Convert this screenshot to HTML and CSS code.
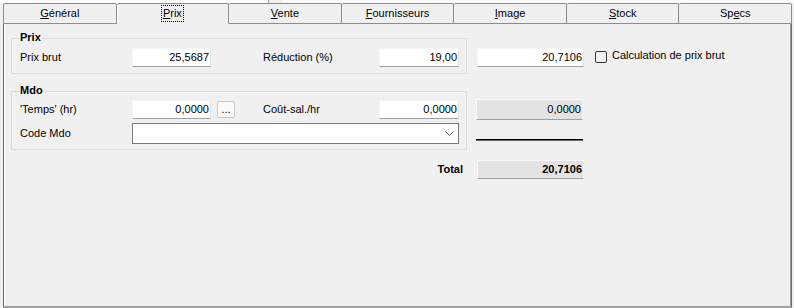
FILE: index.html
```html
<!DOCTYPE html>
<html lang="fr">
<head>
<meta charset="utf-8">
<title>Prix</title>
<link rel="stylesheet" href="styles.css">
</head>
<body>
  <div class="top">
    <div class="topfield"><span class="toptext">Titre : 0000 000000 000000000000 0000000000</span></div>
    <div class="topgap"></div>
    <div class="toprest"></div>
  </div>
  <div class="tabs">
    <div class="tab"><span><u>G</u>énéral</span></div>
    <div class="tab active"><span class="focus"><u>P</u>rix</span></div>
    <div class="tab"><span><u>V</u>ente</span></div>
    <div class="tab"><span><u>F</u>ournisseurs</span></div>
    <div class="tab"><span><u>I</u>mage</span></div>
    <div class="tab"><span><u>S</u>tock</span></div>
    <div class="tab"><span>Sp<u>e</u>cs</span></div>
  </div>
  <div class="panel">
    <div class="form">
      <div class="group g-prix"><span class="gtitle">Prix</span></div>
      <div class="group g-mdo"><span class="gtitle">Mdo</span></div>

      <span class="lbl row-a col-lbl1">Prix brut</span>
      <div class="field row-a col-in1">25,5687</div>
      <span class="lbl row-a col-lbl2">Réduction (%)</span>
      <div class="field row-a col-in2">19,00</div>
      <div class="field row-a col-in3">20,7106</div>
      <div class="chk row-a col-chk"><span class="box"></span><span>Calculation de prix brut</span></div>

      <span class="lbl row-b col-lbl1">'Temps' (hr)</span>
      <div class="field row-b col-in1">0,0000</div>
      <div class="btn row-b col-btn">...</div>
      <span class="lbl row-b col-lbl2">Coût-sal./hr</span>
      <div class="field row-b col-in2">0,0000</div>
      <div class="field ro row-b col-in3">0,0000</div>

      <span class="lbl row-c col-lbl1">Code Mdo</span>
      <div class="select row-c col-sel">
        <svg width="9" height="5" viewBox="0 0 9 5"><path d="M0.5 0.5 L4.5 4.5 L8.5 0.5" fill="none" stroke="#5a5a5a" stroke-width="1"/></svg>
      </div>
      <div class="uline row-c col-in3"></div>

      <span class="lbl tot-lbl row-t col-tot">Total</span>
      <div class="field ro total row-t col-in3">20,7106</div>
    </div>
  </div>
</body>
</html>
```
FILE: styles.css
```css
* { box-sizing: border-box; }

body {
  margin: 0;
  width: 794px;
  height: 308px;
  overflow: hidden;
  background: #f0f0f0;
  font: 11px "Liberation Sans", Arial, sans-serif;
  color: #000;
  display: flex;
  flex-direction: column;
}

/* clipped strip at very top */
.top {
  height: 3px;
  display: flex;
  overflow: hidden;
  flex: none;
}
.topfield {
  width: 269px;
  background: #fff;
  border-right: 1px solid #a0a0a0;
  overflow: hidden;
}
.toptext {
  display: block;
  line-height: 13px;
  margin-top: -10px;
  padding-left: 10px;
  color: #1c0d2c;
  white-space: nowrap;
}
.topgap { width: 14px; background: #f0f0f0; }
.toprest { flex: 1; background: #fbfbfb; }

/* tabs */
.tabs {
  display: flex;
  height: 21px;
  width: 789px;
  margin-left: 3px;
  flex: none;
}
.tab {
  flex: 1;
  border-top: 1px solid #8c8c8c;
  border-right: 1px solid #8c8c8c;
  border-bottom: 1px solid #8c8c8c;
  border-radius: 2px 2px 0 0;
  display: flex;
  align-items: center;
  justify-content: center;
  line-height: 13px;
  background: #f0f0f0;
}
.tab:first-child { border-left: 1px solid #8c8c8c; }
.tab.active {
  border-bottom-color: #f0f0f0;
  box-shadow: inset 1px 0 #fff;
}
.focus {
  outline: 1px dotted #000;
  padding: 1px 1px;
}

/* panel */
.panel {
  flex: 1;
  width: 789px;
  margin-left: 3px;
  border-left: 1px solid #696969;
  border-right: 1px solid #696969;
  border-bottom: 2px solid #a0a0a0;
  box-shadow: inset 1px 0 #fff, inset -1px 0 #a0a0a0;
  padding: 14px 0 0 7px;
}

.form {
  display: grid;
  grid-template-columns: 9px 112px 79px 6px 18px 28px 116px 80px 8px 10px 107px 11px auto;
  grid-template-rows: 10px 19px 7px 17px 9px 19px 4px 21px 6px 10px 19px;
}

.group {
  border: 1px solid #dcdcdc;
  grid-column: 1 / 10;
}
.g-prix { grid-row: 1 / 4; }
.g-mdo { grid-row: 5 / 10; }
.gtitle {
  display: block;
  width: max-content;
  margin: -8px 0 0 7px;
  padding: 0 1px;
  background: #f0f0f0;
  font-weight: bold;
  line-height: 13px;
}

.row-a { grid-row: 2; }
.row-b { grid-row: 6; }
.row-c { grid-row: 8; }
.row-t { grid-row: 11; }
.col-lbl1 { grid-column: 2; }
.col-in1 { grid-column: 3; }
.col-btn { grid-column: 5; }
.col-lbl2 { grid-column: 7; }
.col-in2 { grid-column: 8; }
.col-in3 { grid-column: 11; }
.col-chk { grid-column: 13; }
.col-sel { grid-column: 3 / 9; }
.col-tot { grid-column: 7 / 10; }

.lbl {
  align-self: center;
  line-height: 13px;
  white-space: nowrap;
}
.tot-lbl {
  justify-self: end;
  margin-right: 4px;
  font-weight: bold;
}

.field {
  background: #fff;
  border: 1px solid;
  border-color: #f6f6f6 #e4e4e4 #a0a0a0 #f6f6f6;
  text-align: right;
  padding-right: 1px;
  line-height: 17px;
}
.field.ro {
  background: #e3e3e3;
  border-color: #fafafa #f4f4f4 #a0a0a0 #fafafa;
  margin: -1px 1px -1px -1px;
  line-height: 19px;
}
.field.total {
  margin: 0;
  line-height: 17px;
  font-weight: bold;
}

.btn {
  align-self: center;
  height: 17px;
  background: #fbfbfb;
  border: 1px solid #c6c6c6;
  border-radius: 2px;
  display: flex;
  justify-content: center;
  align-items: flex-end;
  line-height: 13px;
  padding-bottom: 1px;
}

.select {
  background: #fff;
  border: 1px solid #7a7a7a;
  display: flex;
  justify-content: flex-end;
  align-items: center;
  padding-right: 4px;
}

.uline {
  align-self: start;
  margin: 16px 1px 0 -1px;
  height: 2px;
  border-top: 1px solid #000;
  border-bottom: 1px solid #6a6a6a;
}

.chk {
  align-self: start;
  display: flex;
  align-items: flex-start;
  gap: 5px;
  margin-top: 1px;
  line-height: 13px;
  white-space: nowrap;
}
.box {
  width: 12px;
  height: 12px;
  margin-top: 2px;
  border: 1px solid #333;
  border-radius: 2px;
  flex: none;
}
```
